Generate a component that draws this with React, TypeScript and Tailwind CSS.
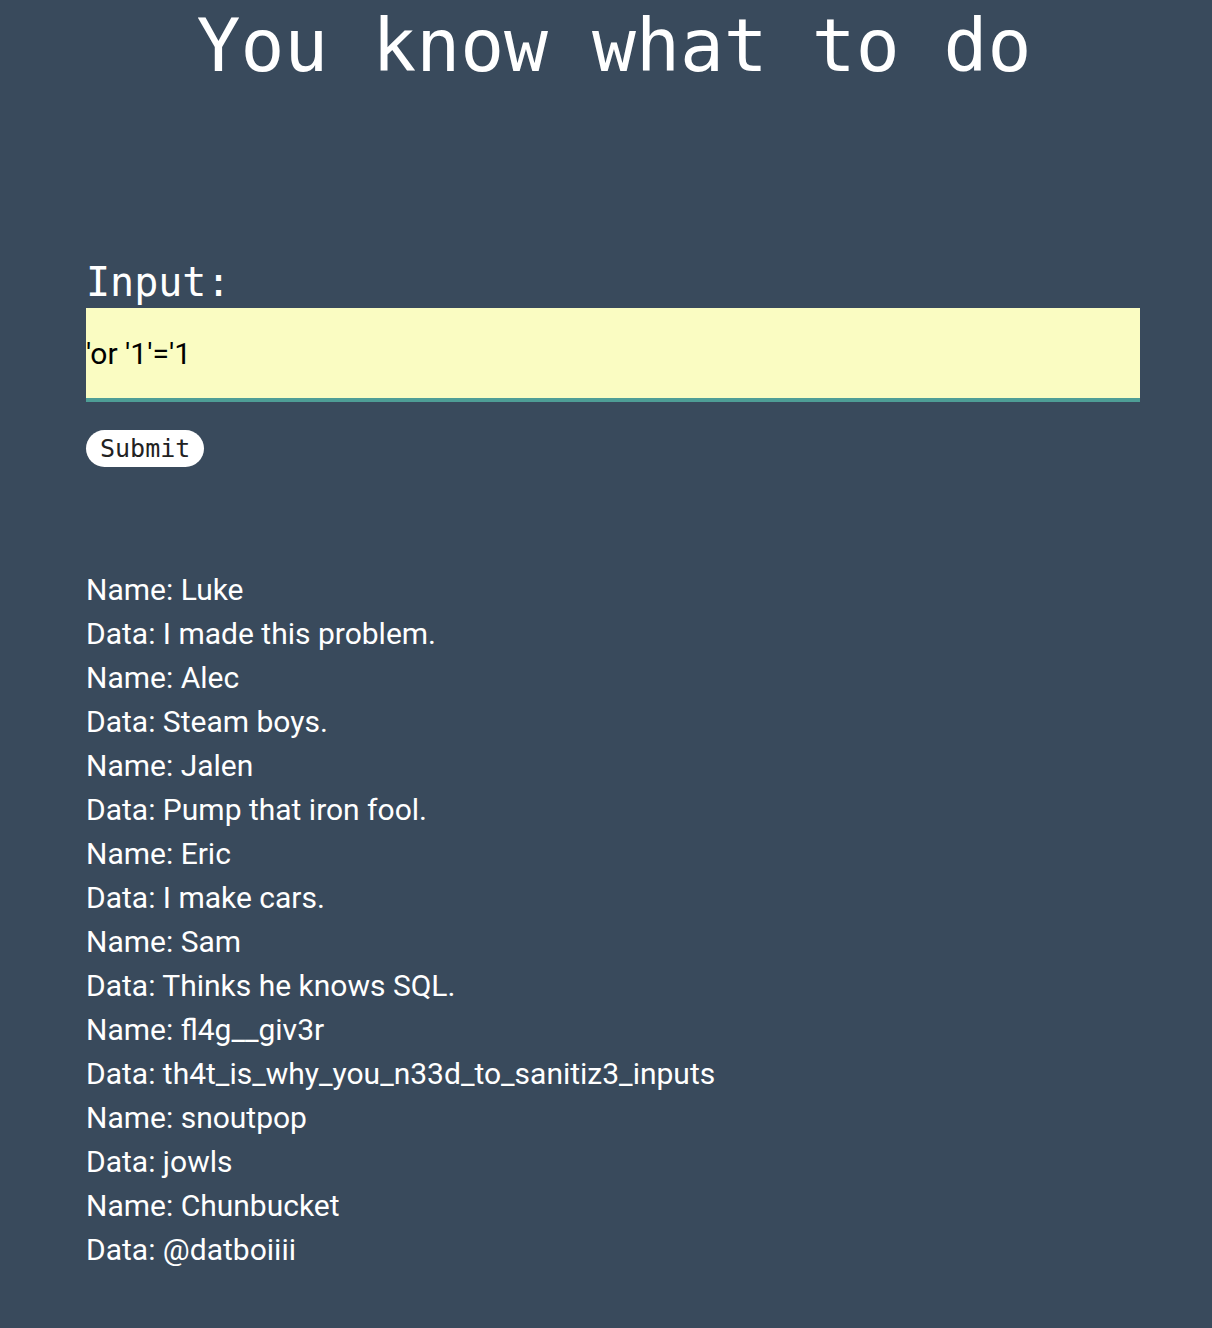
import { useState } from "react";

const rows = [
  ["Luke", "I made this problem."],
  ["Alec", "Steam boys."],
  ["Jalen", "Pump that iron fool."],
  ["Eric", "I make cars."],
  ["Sam", "Thinks he knows SQL."],
  ["fl4g__giv3r", "th4t_is_why_you_n33d_to_sanitiz3_inputs"],
  ["snoutpop", "jowls"],
  ["Chunbucket", "@datboiiii"],
];

export default function App() {
  const [query, setQuery] = useState("'or '1'='1");

  return (
    <div className="min-h-[1328px] bg-[#394a5c] text-white">
      <h1 className="pt-[10px] pl-[16px] text-center font-['DejaVu_Sans_Mono',monospace] text-[73px] leading-[72px] font-normal">
        You know what to do
      </h1>

      <form
        className="mt-[176px] pl-[86px] pr-[72px]"
        onSubmit={(e) => e.preventDefault()}
      >
        <label className="block font-['DejaVu_Sans_Mono',monospace] text-[40px] leading-[48px]">
          Input:
        </label>
        <input
          className="mt-[2px] block h-[94px] w-full border-b-4 border-[#4e9e96] bg-[#fafcc2] font-['Roboto',sans-serif] text-[30px] text-black outline-none"
          value={query}
          onChange={(e) => setQuery(e.target.value)}
        />
        <button
          type="submit"
          className="mt-[28px] h-[37px] rounded-full bg-white px-[14px] font-['DejaVu_Sans_Mono',monospace] text-[25px] leading-[37px] text-[#222]"
        >
          Submit
        </button>
      </form>

      <div className="mt-[101px] pl-[86px] font-['Roboto',sans-serif] text-[30px] leading-[44px]">
        {rows.map(([name, data]) => (
          <div key={name}>
            <p>Name: {name}</p>
            <p>Data: {data}</p>
          </div>
        ))}
      </div>
    </div>
  );
}
